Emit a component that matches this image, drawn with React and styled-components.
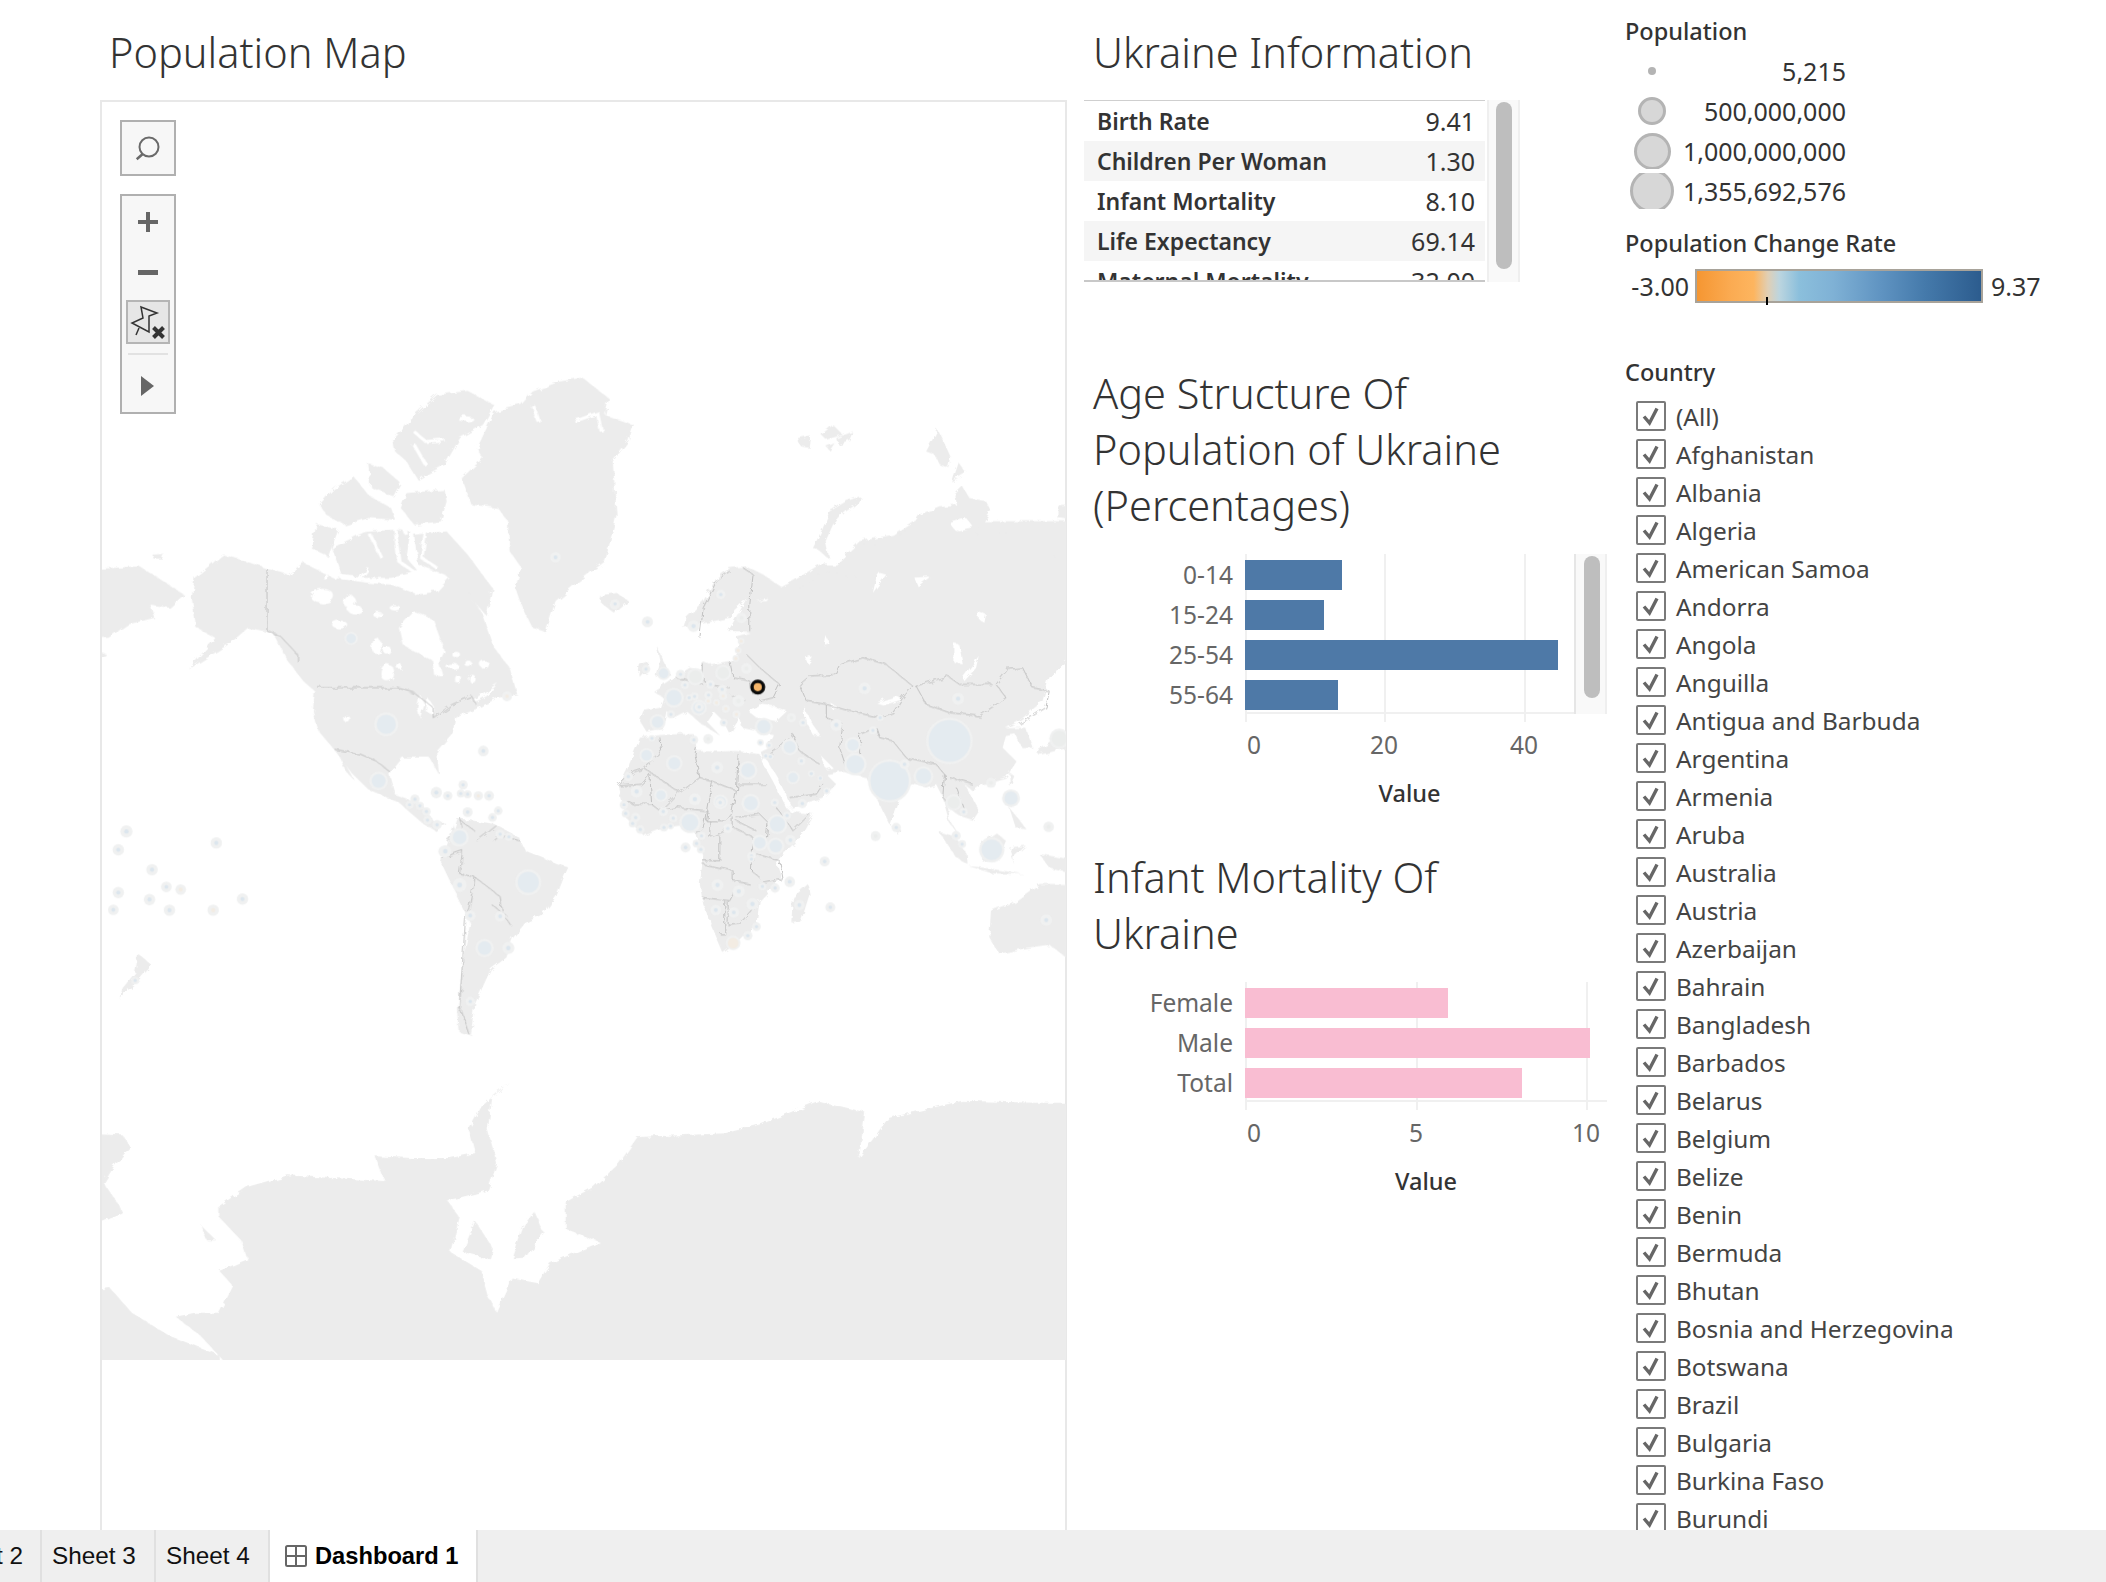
import React from 'react';
import styled, { createGlobalStyle } from 'styled-components';

const FONT = '"Noto Sans", "Open Sans", sans-serif';

const GlobalStyle = createGlobalStyle`
	html, body {
		margin: 0;
		padding: 0;
		background: #fff;
		font-family: ${FONT};
		color: #333;
	}
`;

const COUNTRIES = [
	'(All)', 'Afghanistan', 'Albania', 'Algeria', 'American Samoa', 'Andorra', 'Angola', 'Anguilla',
	'Antigua and Barbuda', 'Argentina', 'Armenia', 'Aruba', 'Australia', 'Austria', 'Azerbaijan',
	'Bahrain', 'Bangladesh', 'Barbados', 'Belarus', 'Belgium', 'Belize', 'Benin', 'Bermuda', 'Bhutan',
	'Bosnia and Herzegovina', 'Botswana', 'Brazil', 'Bulgaria', 'Burkina Faso', 'Burundi',
];

const INFO_ROWS = [
	['Birth Rate', '9.41'],
	['Children Per Woman', '1.30'],
	['Infant Mortality', '8.10'],
	['Life Expectancy', '69.14'],
	['Maternal Mortality', '32.00'],
];

const AGE_ROWS = [['0-14', 97], ['15-24', 79], ['25-54', 313], ['55-64', 93]];
const AGE_TICKS = [['0', 0], ['20', 139], ['40', 279]];
const INFANT_ROWS = [['Female', 203], ['Male', 345], ['Total', 277]];
const INFANT_TICKS = [['0', 0], ['5', 171], ['10', 341]];

const LEGEND = [
	['5,215', 8],
	['500,000,000', 28],
	['1,000,000,000', 37],
	['1,355,692,576', 44],
];

// map outlines, traced in the pixel space of crops of the map
const FRAME_NA = 'translate(100 360) scale(0.3827 0.3333)';
const FRAME_EU = 'translate(560 520) scale(0.3333)';
const FRAME_SOUTH = 'translate(100 800) scale(0.625 0.3827)';
const FRAME_ARCTIC = 'translate(780 400) scale(0.3333)';

const NA_LAND = [
	'M1200,60 1260,48 1330,110 1320,160 1395,190 1380,240 1340,300 1350,460 1320,600 1240,670 1190,720 1165,812 1130,800 1100,730 1085,680 1100,620 1070,570 1065,480 1040,440 970,430 945,350 1000,290 985,260 1030,150 1100,130 1130,90Z',
	'M880,100 960,88 1030,130 1000,190 940,230 900,310 860,335 830,355 800,300 770,270 765,235 800,190 810,170Z',
	'M700,305 740,320 785,365 765,405 705,375Z',
	'M800,395 900,385 905,420 890,480 820,490 785,440Z',
	'M572,430 610,382 662,345 700,400 760,440 770,475 700,470 640,492 590,460Z',
	'M550,560 565,488 622,505 595,585Z',
	'M605,560 690,512 770,505 810,510 800,590 830,630 760,650 680,650 630,640Z',
	'M820,520 905,510 960,580 1025,680 1010,765 960,700 900,640 830,610Z',
	'M1305,700 1350,700 1382,720 1345,757 1310,725Z',
	'M135,580 165,578 160,592 138,592Z',
	'M-40,625 100,615 150,650 218,700 180,740 130,730 140,770 70,790 20,830 -40,830Z',
	'M-40,850 15,880 -40,915Z',
	'M245,650 320,580 380,600 435,622 490,640 530,605 610,650 700,665 760,670 830,700 880,690 920,640 960,690 1000,760 1030,860 1070,920 1090,1000 1040,1010 980,1045 930,1070 925,1110 880,1170 885,1240 860,1190 790,1190 755,1240 770,1300 840,1330 870,1380 905,1390 880,1412 840,1385 780,1325 700,1285 660,1240 610,1165 570,1110 555,1050 560,990 530,960 490,900 450,815 385,800 340,845 230,925 300,830 250,800 238,710Z',
	'M625,1175 665,1260 640,1230Z',
];

const NA_WATER = [
	'M780,800 820,750 870,775 900,870 885,905 895,945 875,945 870,900 820,870 790,850Z',
	'M970,1020 1040,965 1010,1005 985,1020Z',
	'M835,1000 848,1030 835,1070 828,1040Z',
	'M855,1010 875,1040 870,1060 850,1050Z',
];
const NA_CHANNELS = [
	'M820,210 850,240 900,235',
	'M820,250 850,310',
	'M790,480 800,520',
	'M705,520 735,590',
	'M770,500 780,600 830,640',
	'M850,510 840,590 880,620',
	'M630,650 680,650 700,620',
	'M1130,130 1145,180',
	'M1240,180 1300,155 1310,210',
];
const NA_LAKES = [
	[580, 705, 30, 22], [650, 720, 16, 20], [625, 790, 20, 12], [665, 745, 20, 12], [725, 760, 12, 8],
	[770, 740, 14, 8], [722, 855, 12, 24], [748, 865, 10, 12], [750, 935, 18, 26], [780, 915, 8, 8],
	[930, 880, 10, 8], [920, 915, 18, 8], [962, 908, 8, 10], [1004, 910, 12, 12], [935, 955, 8, 12],
	[970, 950, 8, 12], [645, 1075, 8, 10], [955, 172, 20, 8], [590, 648, 5, 10],
];

const EU_LAND = [
	'M370,320 380,290 430,240 470,170 510,140 560,135 610,160 670,200 640,230 590,240 620,240 660,200 700,180 780,130 830,130 900,60 1000,40 1060,0 1560,0 1560,380 1470,470 1450,540 1380,600 1340,622 1400,620 1420,680 1390,682 1368,640 1340,645 1330,680 1372,722 1340,770 1270,790 1240,810 1215,790 1260,870 1240,900 1210,890 1180,870 1162,835 1172,900 1205,955 1170,905 1150,830 1130,790 1100,800 1060,790 1030,800 990,912 950,830 920,770 850,750 800,760 830,790 790,830 690,862 680,840 610,720 600,690 620,680 640,640 550,622 540,590 510,640 490,600 460,570 440,600 482,645 420,605 380,570 340,590 320,570 310,620 260,632 240,600 250,570 300,560 310,530 280,510 340,470 390,440 430,450 428,420 450,430 510,420 540,390 530,345 570,335 500,330 510,290Z',
	'M290,372 302,400 332,460 290,470 300,425Z',
	'M240,430 265,420 265,460 235,462Z',
	'M115,225 170,215 205,240 165,270 130,250Z',
	'M240,650 300,642 350,640 402,640 412,690 470,692 530,690 600,700 612,730 690,872 760,880 720,950 650,1022 665,1070 600,1140 590,1210 540,1262 490,1297 470,1250 430,1150 420,1090 430,1012 410,942 380,912 300,922 250,942 200,892 175,800 200,750Z',
	'M745,1090 750,1120 725,1200 695,1205 700,1130Z',
	'M1140,935 1190,950 1222,1000 1225,1030 1190,1010Z',
	'M1225,1035 1300,1045 1392,1060 1300,1058Z',
	'M1260,970 1310,935 1340,960 1320,1010 1270,1022Z',
	'M1350,980 1400,975 1362,1010 1365,1032Z',
	'M1350,860 1382,900 1402,925 1370,922Z',
	'M1350,755 1365,765 1352,800Z',
	'M1440,1000 1560,1020 1560,1062 1470,1040Z',
	'M1430,692 1500,650 1560,630 1560,672 1440,702Z',
	'M1010,910 1026,930 1010,938Z',
	'M1295,1170 1370,1140 1440,1090 1560,1090 1560,1340 1470,1272 1400,1282 1320,1300 1290,1250Z',
	'M-10,1030 25,1040 0,1085Z',
];

const EU_WATER = [
	'M442,418 472,400 482,340 522,268 560,232 540,270 505,330 570,332 525,342 540,372 510,402Z',
	'M565,570 600,550 640,555 682,570 650,600 590,590Z',
	'M732,552 752,600 782,642 760,642 738,600Z',
	'M812,545 836,560 818,565Z',
	'M950,545 1010,525 1028,535 975,552Z',
	'M1210,470 1258,405 1250,440 1215,480Z',
	'M1185,370 1200,372 1210,430 1185,425Z',
	'M800,345 810,370 795,375Z',
	'M1255,270 1280,280 1275,305 1255,290Z',
	'M735,405 760,410 745,430Z',
	'M1065,170 1110,168 1075,195Z',
	'M800,745 780,700 820,740Z',
];

const SOUTH_LAND = [
	'M570,45 630,60 670,95 680,130 748,175 730,250 710,295 680,320 660,360 650,410 625,440 600,530 595,615 575,605 572,540 580,420 592,320 545,160Z',
	'M60,400 82,430 60,470 30,515 35,490 55,450Z',
	'M-40,870 35,875 47,905 20,960 5,1000 30,1060 35,1080 -40,1130Z',
	'M-40,1285 15,1275 50,1340 110,1400 190,1450 195,1530 -40,1530Z',
	'M190,1060 235,1010 300,980 400,990 455,995 440,930 500,935 560,935 600,922 590,860 610,800 655,735 628,770 620,860 635,950 620,1020 570,1040 555,1045 575,1090 560,1180 610,1230 622,1300 635,1340 660,1250 700,1262 720,1210 800,1155 745,1120 745,1050 790,1010 830,950 860,880 1000,870 1060,845 1150,785 1225,815 1215,935 1262,830 1380,785 1500,790 1600,790 1600,1530 195,1530 195,1462 160,1400 120,1350 150,1340 190,1340 212,1270 190,1230 235,1200 225,1150 190,1090Z',
	'M695,1075 710,1130 680,1195 660,1198 678,1110Z',
	'M600,1100 630,1175 625,1200 580,1180Z',
	'M160,1110 185,1150 170,1150Z',
];

const ARCTIC_LAND = [
	'M0,560 60,560 130,510 180,520 240,530 235,470 260,420 282,420 290,480 300,510 330,470 300,440 340,400 360,400 400,370 420,340 480,315 530,310 525,280 550,255 570,290 620,300 635,330 600,380 570,400 620,390 700,400 760,400 780,470 900,450 900,600 0,600Z',
	'M240,285 250,295 200,330 160,370 138,420 150,475 120,450 100,440 130,380 150,330 200,300Z',
	'M475,85 497,130 515,170 510,200 480,190 465,160 440,150Z',
	'M535,180 560,215 515,240Z',
	'M835,315 900,310 900,360 835,350Z',
	'M50,115 95,105 90,140 65,135Z',
	'M125,100 160,70 190,100 140,115Z',
	'M170,110 220,90 210,115 175,130Z',
	'M140,135 165,125 150,148Z',
];

const ARCTIC_WATER = [
	'M510,365 560,350 585,380 540,390 525,385Z',
	'M405,530 450,525 415,552Z',
	'M300,515 320,520 280,575 290,530Z',
];

const NA_BORDERS = [
	'M435,622 435,810 470,825 515,880 515,902',
	'M567,980 775,980 820,995 870,1040 870,1070 920,1030 970,1005 982,1030',
	'M612,1165 680,1180 720,1200 760,1235',
	'M940,1370 945,1400 905,1440',
	'M985,1440 1035,1395',
];

const EU_BORDERS = [
	'M175,795 220,750 250,740 305,690 300,650',
	'M250,740 360,815 420,770 405,700 410,680',
	'M420,770 455,780 530,810 535,700',
	'M535,790 622,790',
	'M180,795 245,790 270,760 275,850 220,850 200,840',
	'M275,850 300,870 355,815',
	'M300,870 350,860 440,870 455,780',
	'M530,810 515,880 500,900 440,900 445,870',
	'M440,870 430,920 410,940',
	'M450,900 450,950 520,920 520,890',
	'M530,890 600,880 625,905 620,950',
	'M590,930 530,900',
	'M430,1020 480,1020 480,945',
	'M520,920 580,950 575,1050 600,1070',
	'M430,1030 520,1050 520,1080 570,1090',
	'M425,1130 510,1140 520,1120',
	'M495,1140 495,1240 480,1240',
	'M505,1140 505,1215 540,1210 590,1150',
	'M590,1000 660,1020 670,1075 600,1090',
	'M650,860 700,930 750,880',
	'M630,700 660,680 700,640 720,690 780,730',
	'M690,830 770,820 790,790',
	'M800,550 800,590 850,610 840,680 860,740',
	'M860,740 900,700 900,640 950,620',
	'M720,490 750,465 830,460 845,430 910,410 980,430 1060,495',
	'M720,490 740,540 800,550 870,570 960,590 1000,575 1030,530 1060,495',
	'M1070,495 1100,550 1170,575 1260,585 1340,530 1310,490 1345,445 1390,440 1420,500 1470,510 1460,560 1380,610',
	'M1070,495 1165,465 1200,490 1300,490',
	'M950,620 960,650 1000,660 1040,710 1130,730',
	'M1130,730 1155,760 1150,830 1180,860',
	'M1170,770 1240,790',
	'M1190,800 1215,870',
	'M420,350 430,260 470,180 510,150',
	'M550,140 580,160 570,250 570,330',
	'M560,400 600,440 660,490 640,530 600,540',
	'M520,470 570,480 580,520',
	'M510,520 560,540',
	'M430,480 430,430',
	'M350,470 430,490',
	'M510,420 520,470',
	'M440,490 510,500',
];

const SOUTH_BORDERS = [
	'M545,150 580,130 575,190 600,200 640,250 645,300 660,330',
	'M600,200 590,280 585,300 580,420 575,540 590,610',
	'M625,270 650,300',
	'M600,80 575,50',
	'M630,105 640,90 672,105',
];

// [x, y, outer radius] for each country bubble, in the crop they were read from
const NA_BUBBLES = [
	[747, 1090, 36], [727, 1260, 28], [655, 832, 20], [1190, 588, 16], [1345, 730, 15], [1063, 1006, 15, 'o'],
	[1001, 1170, 16], [1430, 782, 16], [878, 1295, 17], [908, 1305, 14], [948, 1272, 14], [942, 1298, 12],
	[960, 1300, 12], [988, 1305, 14, 'o'], [1016, 1305, 15], [1040, 1350, 13], [1025, 1370, 13], [960, 1354, 15],
	[822, 1315, 14], [808, 1332, 12], [835, 1335, 12], [852, 1352, 13], [855, 1378, 13], [880, 1392, 14],
	[935, 1430, 26], [898, 1472, 17], [1045, 1420, 14], [1068, 1428, 12], [67, 1412, 15], [47, 1467, 15], [303, 1445, 15],
];

const EU_BUBBLES = [
	[1170, 660, 70], [990, 780, 65], [1297, 987, 38], [887, 730, 34], [1092, 766, 30], [390, 905, 32],
	[1500, 653, 30, 'n'], [1355, 832, 27], [653, 910, 30], [565, 748, 28], [690, 678, 25], [612, 617, 27],
	[407, 467, 26, 'n'], [342, 530, 30], [311, 457, 20], [417, 560, 24], [293, 603, 24], [490, 455, 24, 'n'],
	[1183, 845, 25, 'n'], [600, 966, 24], [648, 976, 26], [520, 1267, 22, 'o'], [343, 727, 25], [573, 847, 28],
	[260, 703, 22], [915, 502, 18], [1196, 533, 18], [830, 612, 18], [880, 672, 24], [700, 770, 20], [728, 848, 14],
	[303, 823, 20], [405, 835, 18], [482, 843, 22], [230, 812, 18], [205, 767, 14], [192, 852, 13], [197, 878, 12],
	[227, 890, 14], [218, 908, 12], [241, 926, 13], [310, 872, 14], [340, 892, 12], [312, 920, 12], [332, 916, 10],
	[425, 945, 12], [410, 968, 12], [423, 986, 12], [377, 980, 15], [504, 923, 14], [575, 1005, 13], [575, 1015, 10],
	[692, 958, 16], [645, 845, 12], [682, 884, 12], [690, 1083, 16], [795, 1022, 15], [812, 1160, 15], [719, 1153, 16],
	[473, 1093, 18], [537, 1112, 18], [578, 1150, 18], [608, 1097, 12], [646, 1102, 14], [468, 1168, 16], [522, 1175, 16],
	[590, 1218, 13], [564, 1245, 14], [165, 248, 13], [263, 302, 16], [401, 315, 18], [483, 220, 14], [545, 290, 16, 'n'],
	[258, 444, 13], [362, 460, 14], [375, 492, 12], [404, 526, 12], [388, 530, 10], [418, 558, 14], [452, 490, 13],
	[446, 522, 12], [487, 505, 14], [490, 525, 12, 'o'], [560, 442, 16, 'n'], [544, 360, 10, 'o'], [535, 388, 10, 'o'],
	[528, 412, 10, 'o'], [536, 540, 18, 'n'], [530, 580, 12, 'o'], [498, 563, 12, 'o'], [470, 545, 10, 'o'], [445, 540, 10, 'o'],
	[402, 657, 13], [445, 654, 15, 'n'], [276, 652, 10], [333, 580, 12], [492, 605, 12], [695, 590, 14, 'n'], [730, 605, 12],
	[602, 665, 10], [628, 673, 10], [618, 705, 9], [632, 707, 9], [725, 720, 12], [755, 758, 10], [782, 772, 8],
	[801, 810, 10], [940, 628, 12], [962, 590, 10], [1035, 730, 15], [1295, 786, 15, 'n'], [1213, 873, 12], [1190, 945, 14],
	[1208, 970, 12], [948, 946, 15, 'n'], [1010, 920, 14], [1468, 918, 16, 'n'], [1462, 1198, 16], [472, 740, 18], [481, 845, 14],
];

const SOUTH_BUBBLES = [
	[685, 213, 34], [575, 95, 24], [552, 132, 16], [575, 220, 18], [592, 300, 14], [640, 302, 14], [615, 385, 24], [653, 385, 16],
	[592, 525, 12], [41, 80, 16], [28, 128, 15], [185, 110, 15], [82, 180, 15], [28, 240, 15], [105, 225, 14], [128, 232, 14, 'o'],
	[78, 258, 15], [20, 285, 14], [110, 286, 15], [180, 286, 15, 'o'], [227, 257, 15], [55, 470, 10], [1515, 312, 15],
];

const bubbleTint = (kind, big) => {
	if (kind === 'o') return '#f3ece3';
	if (kind === 'n') return '#ebedec';
	return big ? '#e4ebf0' : '#dce6ee';
};

function Bubbles({ items, sx, sy, ox, oy }) {
	return items.map(([x, y, r, kind], i) => {
		const cx = ox + x * sx;
		const cy = oy + y * sy;
		const outer = r * Math.min(sx, sy);
		const big = r > 19;
		return (
			<g key={i}>
				<circle cx={cx} cy={cy} r={outer} fill='#f0f1f1' />
				<circle
					cx={cx}
					cy={cy}
					r={big ? Math.max(outer * 0.72, outer - 2.4) : Math.max(1.6, outer * 0.36)}
					fill={bubbleTint(kind, big)}
				/>
			</g>
		);
	});
}

function WorldMap() {
	return (
		<MapCanvas viewBox='102 100 964 1260' aria-hidden='true'>
			<defs>
				<filter id='coast' filterUnits='userSpaceOnUse' x='40' y='60' width='1100' height='1400'>
					<feTurbulence type='fractalNoise' baseFrequency='0.13' numOctaves='3' seed='4' result='noise' />
					<feDisplacementMap in='SourceGraphic' in2='noise' scale='6' />
					<feGaussianBlur stdDeviation='0.4' />
				</filter>
			</defs>
			<g filter='url(#coast)'>
				<g transform={FRAME_NA} fill='#ececec'>
					{NA_LAND.map((d, i) => <path key={i} d={d} />)}
				</g>
				<g transform={FRAME_EU} fill='#ececec'>
					{EU_LAND.map((d, i) => <path key={i} d={d} />)}
				</g>
				<g transform={FRAME_SOUTH} fill='#ececec'>
					{SOUTH_LAND.map((d, i) => <path key={i} d={d} />)}
				</g>
				<g transform={FRAME_ARCTIC} fill='#ececec'>
					{ARCTIC_LAND.map((d, i) => <path key={i} d={d} />)}
				</g>
				<g transform={FRAME_NA} fill='#fff'>
					{NA_WATER.map((d, i) => <path key={i} d={d} />)}
					{NA_LAKES.map(([cx, cy, rx, ry], i) => <ellipse key={i} cx={cx} cy={cy} rx={rx} ry={ry} />)}
					{NA_CHANNELS.map((d, i) => <path key={i} d={d} fill='none' stroke='#fff' strokeWidth='9' />)}
				</g>
				<g transform={FRAME_EU} fill='#fff'>
					{EU_WATER.map((d, i) => <path key={i} d={d} />)}
					<path d='M612,716 645,772 690,862' fill='none' stroke='#fff' strokeWidth='16' />
				</g>
				<g transform={FRAME_ARCTIC} fill='#fff'>
					{ARCTIC_WATER.map((d, i) => <path key={i} d={d} />)}
				</g>
				<g fill='none' stroke='#bcbcbc' strokeWidth='0.9' strokeLinejoin='round'>
					<g transform={FRAME_NA}>
						{NA_BORDERS.map((d, i) => <path key={i} d={d} vectorEffect='non-scaling-stroke' />)}
					</g>
					<g transform={FRAME_EU}>
						{EU_BORDERS.map((d, i) => <path key={i} d={d} vectorEffect='non-scaling-stroke' />)}
					</g>
					<g transform={FRAME_SOUTH}>
						{SOUTH_BORDERS.map((d, i) => <path key={i} d={d} vectorEffect='non-scaling-stroke' />)}
					</g>
				</g>
			</g>
			<Bubbles items={NA_BUBBLES} sx={0.3827} sy={0.3333} ox={100} oy={360} />
			<Bubbles items={EU_BUBBLES} sx={0.3333} sy={0.3333} ox={560} oy={520} />
			<Bubbles items={SOUTH_BUBBLES} sx={0.625} sy={0.3827} ox={100} oy={800} />
			<circle cx='758' cy='686' r='5.8' fill='#f6b66a' stroke='#0b0b0b' strokeWidth='3.4' />
		</MapCanvas>
	);
}

function MapTools() {
	return (
		<ToolRail>
			<ToolBox>
				<svg width='52' height='52' viewBox='0 0 52 52' fill='none' stroke='#6a6a6a' strokeWidth='2'>
					<circle cx='27' cy='25' r='9.5' />
					<path d='M20.7 32 14.7 37.3' strokeWidth='2.5' />
				</svg>
			</ToolBox>
			<ToolGroup>
				<ToolSlot $height={52}>
					<svg width='20' height='20' viewBox='0 0 20 20' fill='#666'>
						<path d='M8 0h4v8h8v4h-8v8H8v-8H0V8h8z' />
					</svg>
				</ToolSlot>
				<ToolSlot $height={48}>
					<svg width='20' height='5' viewBox='0 0 20 5' fill='#666'>
						<rect width='20' height='5' />
					</svg>
				</ToolSlot>
				<PinBox>
					<svg width='40' height='40' viewBox='0 0 40 40' fill='none' stroke='#333'>
						<path d='M13 5 29 11 21 14 21 30 4 21 15 16Z' strokeWidth='1.5' strokeLinejoin='miter' />
						<path d='M11 26 8 33' strokeWidth='1.5' />
						<path d='M25.5 25.5 35.5 35.5M35.5 25.5 25.5 35.5' strokeWidth='4' />
					</svg>
				</PinBox>
				<ToolDivider />
				<PlaySlot $height={52}>
					<svg width='14' height='20' viewBox='0 0 14 20' fill='#666'>
						<path d='M0 0 13 10 0 20Z' />
					</svg>
				</PlaySlot>
			</ToolGroup>
		</ToolRail>
	);
}

function InfoTable() {
	return (
		<InfoWrap>
			<InfoRows>
				{INFO_ROWS.map(([name, value]) => (
					<InfoRow key={name}>
						<InfoName>{name}</InfoName>
						<span>{value}</span>
					</InfoRow>
				))}
			</InfoRows>
			<InfoScroll>
				<ScrollThumb $height={167} />
			</InfoScroll>
		</InfoWrap>
	);
}

function BarChart({ rows, ticks, color, plotWidth, scroll }) {
	return (
		<Chart>
			<ChartTop>
				<LabelColumn>
					{rows.map(([label]) => <BarLabel key={label}>{label}</BarLabel>)}
				</LabelColumn>
				<Plot $width={plotWidth}>
					{ticks.map(([label, x]) => <GridLine key={label} style={{ left: x }} />)}
					<BarStack>
						{rows.map(([label, width]) => (
							<Bar key={label} $color={color} style={{ width }} />
						))}
					</BarStack>
				</Plot>
				{scroll && (
					<ChartScroll>
						<ScrollThumb $height={142} />
					</ChartScroll>
				)}
			</ChartTop>
			<ChartAxis $width={plotWidth}>
				<TickRow>
					{ticks.map(([label, x], i) => (
						<Tick key={label} $first={i === 0} style={{ left: x }}>{label}</Tick>
					))}
				</TickRow>
				<AxisTitle>Value</AxisTitle>
			</ChartAxis>
		</Chart>
	);
}

export default function App() {
	return (
		<>
			<GlobalStyle />
			<Page>
				<Main>
					<MapColumn>
						<Title>Population Map</Title>
						<MapPane>
							<MapTools />
							<WorldMap />
						</MapPane>
					</MapColumn>
					<InfoColumn>
						<Title>Ukraine Information</Title>
						<InfoTable />
						<AgeTitle>Age Structure Of<br />Population of Ukraine<br />(Percentages)</AgeTitle>
						<BarChart rows={AGE_ROWS} ticks={AGE_TICKS} color='#4e79a7' plotWidth={329} scroll />
						<InfantTitle>Infant Mortality Of<br />Ukraine</InfantTitle>
						<BarChart rows={INFANT_ROWS} ticks={INFANT_TICKS} color='#f9bdd2' plotWidth={362} />
					</InfoColumn>
					<FilterColumn>
						<FilterTitle>Population</FilterTitle>
						<LegendList>
							{LEGEND.map(([value, size]) => (
								<LegendRow key={value}>
									<LegendMark>
										<LegendDot $size={size} />
									</LegendMark>
									<span>{value}</span>
								</LegendRow>
							))}
						</LegendList>
						<RateTitle>Population Change Rate</RateTitle>
						<RateRow>
							<RateMin>-3.00</RateMin>
							<RateBar>
								<RateTick />
							</RateBar>
							<span>9.37</span>
						</RateRow>
						<CountryTitle>Country</CountryTitle>
						{COUNTRIES.map((name) => (
							<CountryRow key={name}>
								<CheckBox>
									<svg width='26' height='26' viewBox='0 0 26 26' fill='none' stroke='#666' strokeWidth='3.4'>
										<path d='M6 13.5 11.5 20 19 5.5' />
									</svg>
								</CheckBox>
								{name}
							</CountryRow>
						))}
					</FilterColumn>
				</Main>
				<TabBar>
					<CutTab>Sheet 2</CutTab>
					<SheetTab>Sheet 3</SheetTab>
					<SheetTab>Sheet 4</SheetTab>
					<ActiveTab>
						<svg width='22' height='22' viewBox='0 0 22 22' fill='none' stroke='#666' strokeWidth='2'>
							<rect x='1' y='1' width='20' height='20' rx='1.5' />
							<path d='M11 1v20M1 11h20' />
						</svg>
						Dashboard 1
					</ActiveTab>
				</TabBar>
			</Page>
		</>
	);
}

const Page = styled.div`
	width: 2106px;
	height: 1582px;
	display: flex;
	flex-direction: column;
	overflow: hidden;
`;
const Main = styled.div`
	height: 1530px;
	display: flex;
	overflow: hidden;
`;
const MapColumn = styled.section`
	width: 984px;
	padding-left: 100px;
`;
const InfoColumn = styled.section`
	width: 541px;
`;
const FilterColumn = styled.aside`
	flex: 1;
	font-size: 25px;
	padding-top: 13px;
`;
const Title = styled.h2`
	margin: 0;
	height: 100px;
	padding: 24px 0 0 9px;
	box-sizing: border-box;
	font-size: 41.5px;
	line-height: 56px;
	font-weight: 300;
	color: #333;
`;
const AgeTitle = styled(Title)`
	height: auto;
	padding-top: 0;
	margin-top: 83px;
`;
const InfantTitle = styled(Title)`
	height: auto;
	padding-top: 0;
	margin-top: 37px;
`;
const MapPane = styled.div`
	position: relative;
	width: 967px;
	height: 1430px;
	box-sizing: border-box;
	border: 2px solid #e8e8e8;
	border-bottom: 0;
`;
const MapCanvas = styled.svg`
	display: block;
	width: 964px;
	height: 1258px;
`;
const ToolRail = styled.div`
	position: absolute;
	left: 18px;
	top: 18px;
	width: 56px;
	display: flex;
	flex-direction: column;
	gap: 18px;
`;
const ToolBox = styled.div`
	height: 56px;
	box-sizing: border-box;
	border: 2px solid #b0b0b0;
	background: #f7f7f7;
`;
const ToolGroup = styled.div`
	height: 220px;
	box-sizing: border-box;
	border: 2px solid #b0b0b0;
	background: #f7f7f7;
	display: flex;
	flex-direction: column;
	align-items: center;
`;
const ToolSlot = styled.div`
	height: ${(p) => p.$height}px;
	display: flex;
	align-items: center;
	justify-content: center;
`;
const PlaySlot = styled(ToolSlot)`
	margin-top: 5px;
`;
const PinBox = styled.div`
	width: 44px;
	height: 44px;
	margin-top: 4px;
	box-sizing: border-box;
	border: 2px solid #b5b5b5;
	background: #e6e6e6;
`;
const ToolDivider = styled.div`
	width: 40px;
	height: 2px;
	margin-top: 9px;
	background: #e2e2e2;
`;
const InfoWrap = styled.div`
	display: flex;
	height: 182px;
`;
const InfoRows = styled.div`
	width: 401px;
	height: 182px;
	box-sizing: border-box;
	overflow: hidden;
	border-top: 1px solid #cfcfcf;
	border-bottom: 2px solid #c8c8c8;
`;
const InfoRow = styled.div`
	height: 40px;
	display: flex;
	align-items: center;
	justify-content: space-between;
	padding: 0 10px 0 13px;
	font-size: 25px;
	color: #333;
	&:nth-child(even) {
		background: #f5f5f5;
	}
`;
const InfoName = styled.span`
	font-size: 23px;
	font-weight: 600;
`;
const InfoScroll = styled.div`
	width: 33px;
	margin-left: 2px;
	box-sizing: border-box;
	padding: 2px 0 0 7px;
	background: #f9f9f9;
	border-left: 2px solid #efefef;
	border-right: 2px solid #efefef;
`;
const ScrollThumb = styled.div`
	width: 16px;
	height: ${(p) => p.$height}px;
	border-radius: 8px;
	background: #bebebe;
`;
const Chart = styled.div`
	margin-top: 21px;
`;
const ChartTop = styled.div`
	display: flex;
`;
const LabelColumn = styled.div`
	width: 149px;
	margin-right: 12px;
	padding-top: 6px;
	font-size: 24.5px;
	color: #666;
	text-align: right;
`;
const BarLabel = styled.div`
	height: 40px;
	line-height: 30px;
	&:last-child {
		height: 30px;
	}
`;
const Plot = styled.div`
	position: relative;
	width: ${(p) => p.$width}px;
	box-sizing: border-box;
	padding: 6px 0 2px;
	border-bottom: 2px solid #f0f0f0;
`;
const GridLine = styled.div`
	position: absolute;
	top: 0;
	bottom: -10px;
	width: 2px;
	background: #f0f0f0;
`;
const BarStack = styled.div`
	position: relative;
	display: flex;
	flex-direction: column;
	gap: 10px;
`;
const Bar = styled.div`
	height: 30px;
	background: ${(p) => p.$color};
`;
const ChartScroll = styled.div`
	width: 33px;
	box-sizing: border-box;
	padding: 2px 0 0 8px;
	background: #f9f9f9;
	border-left: 2px solid #e6e6e6;
	border-right: 2px solid #efefef;
`;
const ChartAxis = styled.div`
	width: ${(p) => p.$width}px;
	margin-left: 161px;
`;
const TickRow = styled.div`
	position: relative;
	height: 62px;
`;
const Tick = styled.span`
	position: absolute;
	top: 16px;
	font-size: 24.5px;
	line-height: 30px;
	color: #666;
	transform: translateX(${(p) => (p.$first ? '2px' : '-50%')});
`;
const AxisTitle = styled.div`
	height: 36px;
	line-height: 34px;
	text-align: center;
	font-size: 23.5px;
	font-weight: 500;
	color: #333;
`;
const FilterTitle = styled.h3`
	margin: 0;
	height: 36px;
	line-height: 36px;
	font-size: 23.5px;
	font-weight: 500;
	color: #333;
`;
const RateTitle = styled(FilterTitle)`
	margin-top: 16px;
`;
const CountryTitle = styled(FilterTitle)`
	margin-top: 51px;
	margin-bottom: 7px;
`;
const LegendList = styled.div`
	display: flex;
	flex-direction: column;
	gap: 4px;
	width: 221px;
	margin-top: 4px;
`;
const LegendRow = styled.div`
	height: 36px;
	display: flex;
	align-items: center;
	justify-content: space-between;
	overflow: hidden;
`;
const LegendMark = styled.div`
	width: 54px;
	flex: none;
	display: flex;
	justify-content: center;
`;
const LegendDot = styled.div`
	flex: none;
	width: ${(p) => p.$size}px;
	height: ${(p) => p.$size}px;
	box-sizing: border-box;
	border-radius: 50%;
	background: ${(p) => (p.$size < 10 ? '#b4b4b4' : '#d7d7d7')};
	border: ${(p) => (p.$size < 10 ? '0' : '3px solid #b4b4b4')};
`;
const RateRow = styled.div`
	display: flex;
	align-items: center;
	height: 34px;
	margin-top: 8px;
`;
const RateMin = styled.span`
	width: 64px;
	margin-right: 6px;
	text-align: right;
`;
const RateBar = styled.div`
	position: relative;
	width: 288px;
	height: 34px;
	margin-right: 8px;
	box-sizing: border-box;
	border: 2px solid #a8a39a;
	background: linear-gradient(90deg, #f59632 0%, #fbab52 12%, #fdb55f 20%, #e0cfb5 25%, #bcd5df 29%, #8bbfdc 36%, #7fb1d5 48%, #5f93c1 65%, #457aab 80%, #2c5c8e 100%);
`;
const RateTick = styled.div`
	position: absolute;
	left: 69px;
	bottom: -4px;
	width: 2px;
	height: 8px;
	background: #000;
`;
const CountryRow = styled.label`
	height: 38px;
	display: flex;
	align-items: center;
	gap: 10px;
	padding-left: 11px;
	font-size: 24.4px;
	color: #444;
`;
const CheckBox = styled.span`
	width: 30px;
	height: 30px;
	box-sizing: border-box;
	border: 2px solid #7a7a7a;
	border-radius: 2px;
	display: flex;
`;
const TabBar = styled.nav`
	height: 52px;
	display: flex;
	background: #efefef;
	font-family: "Liberation Sans", Arial, sans-serif;
	font-size: 24.3px;
	color: #111;
`;
const SheetTab = styled.div`
	width: 114px;
	box-sizing: border-box;
	border-right: 2px solid #e0e0e0;
	padding-left: 10px;
	display: flex;
	align-items: center;
	white-space: nowrap;
`;
const CutTab = styled(SheetTab)`
	width: 42px;
	padding-left: 0;
	overflow: hidden;
	justify-content: flex-end;
	padding-right: 17px;
`;
const ActiveTab = styled(SheetTab)`
	width: 208px;
	background: #fff;
	gap: 8px;
	padding-left: 15px;
	font-size: 23.7px;
	font-weight: 700;
	color: #000;
`;
